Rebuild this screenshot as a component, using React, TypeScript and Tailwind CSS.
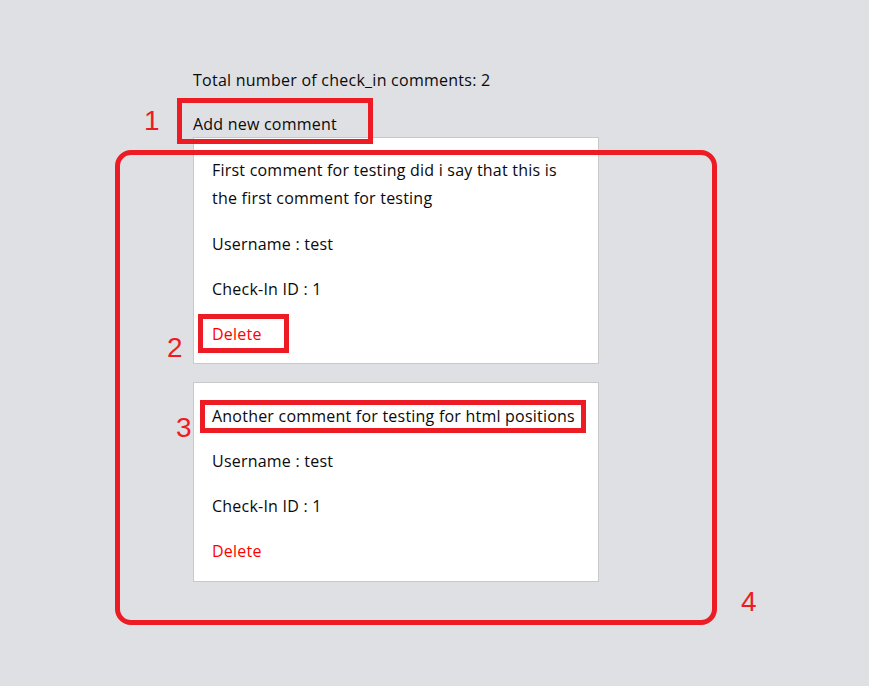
import React from "react";

const font = { fontFamily: '"Open Sans", "Liberation Sans", sans-serif' };

function Card({ lines, first }: { lines: React.ReactNode; first: boolean }) {
  return (
    <div
      className={`w-[406px] border border-[#c8c8c8] bg-white pl-[18px] pr-[22px] ${
        first ? "pt-[18px] pb-[15px]" : "pt-[19px] pb-[16px]"
      } flex flex-col gap-[17px] text-[16px] leading-[28px] tracking-[0.22px] text-[#0a0a0a]`}
    >
      <p className={first ? "mb-[1px]" : ""}>{lines}</p>
      <p>Username : test</p>
      <p>Check-In ID : 1</p>
      <p className="text-[#ff0000]">Delete</p>
    </div>
  );
}

export default function App() {
  return (
    <div className="relative w-full min-h-[686px] bg-[#dfe0e4] overflow-hidden" style={font}>
      <div className="pl-[193px] pt-[66px] flex flex-col">
        <p className="text-[16px] leading-[28px] tracking-[0.25px] text-[#0a0a0a]">
          Total number of check_in comments: 2
        </p>
        <p className="mt-[17px] text-[16px] leading-[26px] tracking-[0.22px] text-[#0a0a0a]">Add new comment</p>
        <div className="flex flex-col gap-[18px]">
          <Card first lines="First comment for testing did i say that this is the first comment for testing" />
          <Card first={false} lines="Another comment for testing for html positions" />
        </div>
      </div>

      {/* annotations */}
      <div className="absolute left-[177px] top-[98px] w-[196px] h-[46px] border-[5px] border-[#ed1c24]" />
      <div className="absolute left-[115px] top-[150px] w-[602px] h-[475px] border-[5px] border-[#ed1c24] rounded-[16px]" />
      <div className="absolute left-[198px] top-[314px] w-[91px] h-[39px] border-[5px] border-[#ed1c24]" />
      <div className="absolute left-[200px] top-[400px] w-[386px] h-[33px] border-[5px] border-[#ed1c24]" />

      <span
        className="absolute left-[144px] top-[107px] text-[28px] leading-none text-[#ed1c24]"
        style={{ fontFamily: '"Liberation Sans", sans-serif' }}
      >
        1
      </span>
      <span
        className="absolute left-[167px] top-[334px] text-[28px] leading-none text-[#ed1c24]"
        style={{ fontFamily: '"Liberation Sans", sans-serif' }}
      >
        2
      </span>
      <span
        className="absolute left-[176px] top-[414px] text-[28px] leading-none text-[#ed1c24]"
        style={{ fontFamily: '"Liberation Sans", sans-serif' }}
      >
        3
      </span>
      <span
        className="absolute left-[741px] top-[588px] text-[28px] leading-none text-[#ed1c24]"
        style={{ fontFamily: '"Liberation Sans", sans-serif' }}
      >
        4
      </span>
    </div>
  );
}
